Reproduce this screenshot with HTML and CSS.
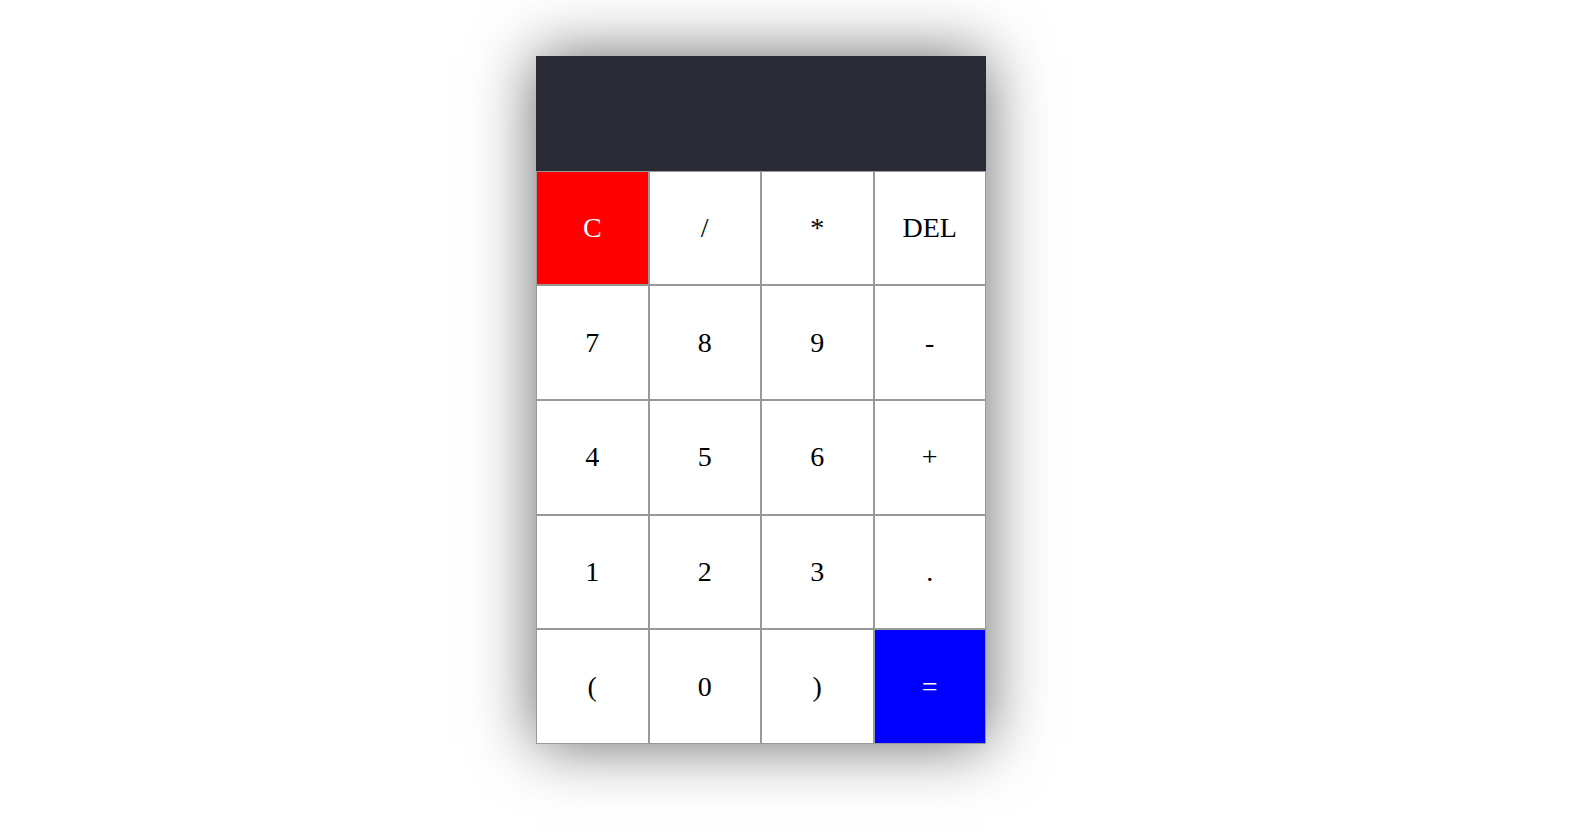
FILE: index.html
```html
<!DOCTYPE html>
<html>
<head>
<meta charset="utf-8">
<title>Calculator</title>
<link rel="stylesheet" href="styles.css">
</head>
<body>
<div class="calculator">
  <div class="output"></div>
  <button class="key key-clear">C</button>
  <button class="key">/</button>
  <button class="key">*</button>
  <button class="key">DEL</button>
  <button class="key">7</button>
  <button class="key">8</button>
  <button class="key">9</button>
  <button class="key">-</button>
  <button class="key">4</button>
  <button class="key">5</button>
  <button class="key">6</button>
  <button class="key">+</button>
  <button class="key">1</button>
  <button class="key">2</button>
  <button class="key">3</button>
  <button class="key">.</button>
  <button class="key">(</button>
  <button class="key">0</button>
  <button class="key">)</button>
  <button class="key key-equals">=</button>
</div>
</body>
</html>
```

FILE: styles.css
```css
html, body {
  margin: 0;
  padding: 0;
  background: #ffffff;
}

body {
  width: 1594px;
  height: 838px;
  overflow: hidden;
  font-family: "Liberation Serif", "Times New Roman", serif;
}

.calculator {
  display: grid;
  grid-template-columns: repeat(4, 112.5px);
  grid-template-rows: repeat(6, 114.667px);
  width: 450px;
  margin: 56px 0 0 536px;
  box-shadow: 0 0 60px rgba(0, 0, 0, 0.6);
}

.output {
  grid-column: 1 / -1;
  background: #282b34;
}

.key {
  box-sizing: border-box;
  margin: 0;
  padding: 0;
  border: 1px solid #999999;
  background: #ffffff;
  color: #000000;
  font-family: "Liberation Serif", "Times New Roman", serif;
  font-size: 28px;
  cursor: pointer;
}

.key-clear {
  background: #ff0000;
  color: #ffffff;
}

.key-equals {
  background: #0000ff;
  color: #ffffff;
}
```
